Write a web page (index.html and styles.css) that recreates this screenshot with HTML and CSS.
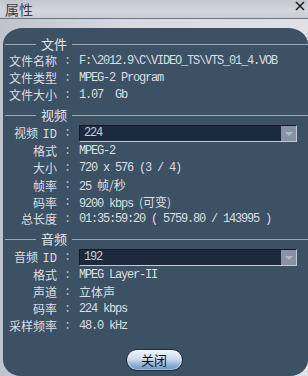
FILE: index.html
```html
<!DOCTYPE html>
<html lang="zh-CN">
<head>
  <meta charset="UTF-8"/>
  <title>属性</title>
  <link rel="stylesheet" href="styles.css">
</head>
<body>
  <div class="window">
    <div class="titlebar">
      <span class="title">属性</span>
      <svg class="close" width="10" height="10" viewBox="0 0 10 10">
        <path d="M1 1 L9 9 M9 1 L1 9" stroke="#202428" stroke-width="1.6" fill="none"/>
      </svg>
    </div>

    <div class="panel">
      <!-- File -->
      <div class="section-head"><span>文件</span></div>
      <div class="row"><span class="label">文件名称</span><span class="colon">:</span><span class="value">F:\2012.9\C\VIDEO_TS\VTS_01_4.VOB</span></div>
      <div class="row"><span class="label">文件类型</span><span class="colon">:</span><span class="value">MPEG-2 Program</span></div>
      <div class="row"><span class="label">文件大小</span><span class="colon">:</span><span class="value">1.07&nbsp; Gb</span></div>

      <!-- Video -->
      <div class="section-head"><span>视频</span></div>
      <div class="row combo-row"><span class="label">视频 <span class="mono">ID</span></span><span class="colon">:</span>
        <div class="combo"><span class="combo-text">224</span><span class="combo-btn"></span></div>
      </div>
      <div class="row"><span class="label">格式</span><span class="colon">:</span><span class="value">MPEG-2</span></div>
      <div class="row"><span class="label">大小</span><span class="colon">:</span><span class="value">720 x 576 (3 / 4)</span></div>
      <div class="row"><span class="label">帧率</span><span class="colon">:</span><span class="value">25 <span class="cjk">帧/秒</span></span></div>
      <div class="row"><span class="label">码率</span><span class="colon">:</span><span class="value">9200 kbps <span class="cjk">(可变)</span></span></div>
      <div class="row"><span class="label">总长度</span><span class="colon">:</span><span class="value">01:35:59:20 ( 5759.80 / 143995 )</span></div>

      <!-- Audio -->
      <div class="section-head"><span>音频</span></div>
      <div class="row combo-row"><span class="label">音频 <span class="mono">ID</span></span><span class="colon">:</span>
        <div class="combo"><span class="combo-text">192</span><span class="combo-btn"></span></div>
      </div>
      <div class="row"><span class="label">格式</span><span class="colon">:</span><span class="value">MPEG Layer-II</span></div>
      <div class="row"><span class="label">声道</span><span class="colon">:</span><span class="value cjk">立体声</span></div>
      <div class="row"><span class="label">码率</span><span class="colon">:</span><span class="value">224 kbps</span></div>
      <div class="row"><span class="label">采样频率</span><span class="colon">:</span><span class="value">48.0 kHz</span></div>

      <div class="btn-container">
        <button class="btn">关闭</button>
      </div>
    </div>
  </div>
</body>
</html>
```

FILE: styles.css
```css
:root {
  --panel-bg: #3d5165;
  --text-color: #dcdfe2;
  --line-color: #9ea7b0;
  --combo-bg: #1d2a3e;
  --cjk: "Noto Sans CJK SC", "Noto Sans", sans-serif;
  --mono: "Liberation Mono", "DejaVu Sans Mono", monospace;
}

html, body {
  margin: 0;
  padding: 0;
}

body {
  width: 308px;
  height: 376px;
  overflow: hidden;
  font-family: var(--cjk);
  font-size: 12px;
  background: linear-gradient(90deg, #bfc3cc 0%, #d6d9df 40%, #dfe1e5 100%);
}

.window {
  height: 376px;
  display: flex;
  flex-direction: column;
}

.titlebar {
  height: 18px;
  display: flex;
  align-items: center;
  justify-content: space-between;
  padding: 0 3px 0 5px;
  border-bottom: 1px solid #6f7683;
  background: linear-gradient(180deg, #c2c6cf 0%, #d3d6dc 60%, #c9ccd3 100%);
}

.title {
  font-size: 14px;
  color: #3a3d44;
  line-height: 18px;
}

.close {
  margin-top: -6px;
}

.panel {
  flex: 1;
  margin: 9px 0 0 3px;
  padding-top: 8px;
  background-color: var(--panel-bg);
  border-radius: 20px 20px 18px 18px / 16px 16px 16px 16px;
  color: var(--text-color);
}

.section-head {
  height: 16px;
  display: flex;
  align-items: center;
  font-size: 13px;
  color: #e4e6e8;
}

.section-head::before,
.section-head::after {
  content: "";
  height: 1px;
  background-color: var(--line-color);
}

.section-head::before {
  width: 31px;
  margin-left: 2px;
}

.section-head::after {
  flex: 1;
}

.section-head span {
  padding: 0 5px;
  line-height: 16px;
}

.row + .section-head {
  margin-top: 4px;
}

.row {
  display: grid;
  grid-template-columns: 54px 22px 1fr;
  align-items: center;
  height: 17px;
}

.combo-row {
  height: 18px;
  margin-top: 1px;
}

.label {
  text-align: right;
  white-space: nowrap;
}

.mono,
.colon,
.value {
  font-family: var(--mono);
  font-size: 12px;
  letter-spacing: -1.2px;
}

.mono {
  margin-left: 2px;
  letter-spacing: 0;
}

.colon {
  padding-left: 7px;
  color: #b4bac2;
}

.value {
  white-space: nowrap;
}

.cjk,
.value.cjk {
  font-family: var(--cjk);
  font-size: 12px;
  letter-spacing: 0;
}

.combo {
  width: 218px;
  height: 17px;
  box-sizing: border-box;
  display: flex;
  align-items: center;
  justify-content: space-between;
  background-color: var(--combo-bg);
  border-top: 1px solid #121a28;
  border-left: 1px solid #121a28;
  border-bottom: 1px solid #c3cad6;
  border-right: 1px solid #c3cad6;
}

.combo-text {
  padding-left: 4px;
  font-family: var(--mono);
  font-size: 12px;
  letter-spacing: -1.2px;
  color: #c9ced6;
}

.combo-btn {
  width: 15px;
  height: 15px;
  background-color: #8a90a6;
  position: relative;
}

.combo-btn::after {
  content: "";
  position: absolute;
  left: 4px;
  top: 6px;
  border-left: 4px solid transparent;
  border-right: 4px solid transparent;
  border-top: 4px solid #b4b8c6;
}

.btn-container {
  display: flex;
  justify-content: center;
  margin-top: 15px;
  padding-right: 3px;
}

.btn {
  width: 57px;
  height: 22px;
  padding: 0;
  border: 1px solid #1c2a3c;
  border-radius: 11px;
  background: linear-gradient(180deg, #f2f5fa 0%, #cfdcec 45%, #8fb0d6 75%, #6e92c2 100%);
  box-shadow: inset 0 0 0 1px rgba(255, 255, 255, 0.4);
  font-family: var(--cjk);
  font-size: 13px;
  color: #101418;
  line-height: 20px;
}
```
